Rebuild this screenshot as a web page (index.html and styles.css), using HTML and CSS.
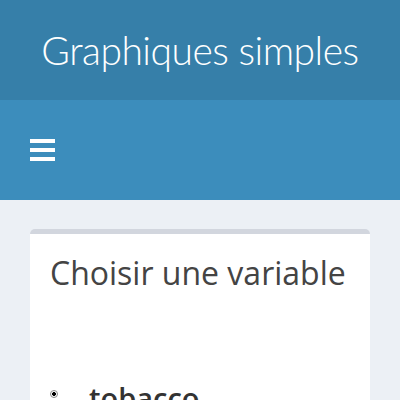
FILE: index.html
```html
<!DOCTYPE html>
<html>
<head>
<meta charset="utf-8">
<link rel="stylesheet" href="styles.css">
</head>
<body>
<header class="logo-bar">
  <span class="logo">Graphiques simples</span>
</header>
<nav class="navbar">
  <span class="toggle" aria-label="menu">
    <span class="bar"></span><span class="bar"></span><span class="bar"></span>
  </span>
</nav>
<main class="content">
  <section class="box">
    <h3 class="box-title">Choisir une variable</h3>
    <div class="radio">
      <label class="radio-label"><input class="radio-input" type="radio" name="var" checked><span>tobacco</span></label>
    </div>
  </section>
</main>
</body>
</html>
```
FILE: styles.css
```css
html, body {
  margin: 0;
  padding: 0;
  background: #ecf0f5;
  font-family: "Open Sans", "Liberation Sans", sans-serif;
  color: #444;
}
.logo-bar {
  height: 100px;
  background: #367fa9;
  display: flex;
  align-items: center;
  justify-content: center;
}
.logo {
  color: #fff;
  font-family: Lato, sans-serif;
  font-weight: 300;
  font-size: 39px;
  letter-spacing: -0.5px;
}
.navbar {
  height: 100px;
  background: #3c8dbc;
  display: flex;
  align-items: center;
  padding-left: 30px;
}
.toggle {
  display: flex;
  flex-direction: column;
  gap: 5px;
}
.bar {
  display: block;
  width: 25px;
  height: 4px;
  background: #fff;
}
.content {
  padding: 29px 30px 30px;
}
.box {
  background: #fff;
  border-top: 5px solid #d2d6de;
  border-radius: 5px;
  padding: 19px 20px 0;
  height: 200px;
}
.box-title {
  margin: 0;
  font-weight: 400;
  font-size: 32px;
  line-height: 40px;
  color: #444;
}
.radio {
  margin-top: 85px;
}
.radio-label {
  display: flex;
  align-items: flex-start;
  gap: 31px;
  font-size: 29px;
  font-weight: 600;
  color: #333;
}
.radio-input {
  appearance: none;
  -webkit-appearance: none;
  margin: 12px 0 0;
  width: 8px;
  height: 8px;
  border: 1px solid #888;
  border-radius: 50%;
  background: radial-gradient(circle, #000 0 1.6px, #fff 2.2px);
  flex: none;
}
```
